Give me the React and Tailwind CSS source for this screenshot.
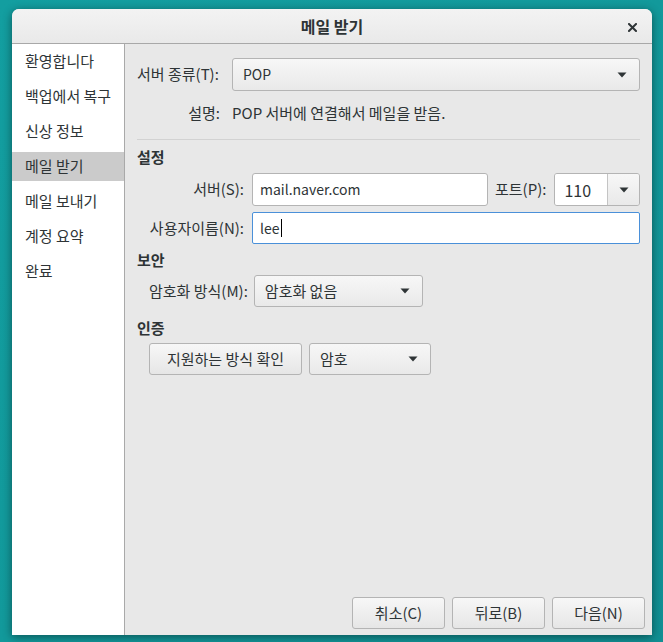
import React from "react";

const font = { fontFamily: '"Noto Sans CJK KR", "Noto Sans", sans-serif' };

function Arrow() {
  return (
    <svg width="10" height="6" viewBox="0 0 10 6" className="shrink-0">
      <path d="M0.5 0.5 L9.5 0.5 L5 5.5 Z" fill="#2e3436" />
    </svg>
  );
}

function Combo({ className, label, labelClass = "" }) {
  return (
    <div
      className={
        "flex items-center justify-between rounded-[3px] border border-[#b4b4b4] bg-gradient-to-b from-[#f7f7f7] to-[#e9e9e9] pl-[10px] pr-[12px] text-[15px] text-[#2e3436] " +
        className
      }
    >
      <span className={labelClass}>{label}</span>
      <Arrow />
    </div>
  );
}

function Button({ className, children }) {
  return (
    <div
      className={
        "flex items-center justify-center rounded-[3px] border border-[#b4b4b4] bg-gradient-to-b from-[#f7f7f7] to-[#e6e6e6] text-[15px] text-[#2e3436] " +
        className
      }
    >
      {children}
    </div>
  );
}

export default function App() {
  const items = ["환영합니다", "백업에서 복구", "신상 정보", "메일 받기", "메일 보내기", "계정 요약", "완료"];
  return (
    <div
      className="w-[663px] h-[642px] bg-gradient-to-br from-[#139ea0] via-[#12999b] to-[#118f93] pt-[9px] pl-[12px]"
      style={font}
    >
      <div className="w-[640px] h-[626px] flex flex-col rounded-t-[7px] bg-[#e8e8e8] shadow-[0_2px_10px_rgba(0,0,0,0.45)] overflow-hidden">
        {/* Title bar */}
        <div className="relative h-[35px] shrink-0 flex items-center justify-center bg-gradient-to-b from-[#f3f3f3] to-[#e9e9e9] border-b border-[#a8a8a8]">
          <span className="text-[16px] font-bold text-[#2e3436]">메일 받기</span>
          <span className="absolute right-[15px] top-[14px]">
            <svg width="9" height="9" viewBox="0 0 9 9">
              <path d="M1 1 L8 8 M8 1 L1 8" stroke="#2e3436" strokeWidth="2" strokeLinecap="square" />
            </svg>
          </span>
        </div>
        <div className="flex flex-1 min-h-0">
          {/* Sidebar */}
          <div className="w-[113px] shrink-0 bg-white border-r border-[#a9a9a9]">
            {items.map((t, i) => (
              <div key={t} className="h-[35px] py-[3px]">
                <div
                  className={
                    "h-[29px] flex items-center pl-[13px] text-[15px] text-[#2e3436] " +
                    (i === 3 ? "bg-[#cbcbcb]" : "")
                  }
                >
                  {t}
                </div>
              </div>
            ))}
          </div>
          {/* Content */}
          <div className="flex-1 flex flex-col pl-[12px] pr-[12px] pt-[14px] pb-[6px] text-[15px] text-[#2e3436]">
            <div className="flex items-center h-[33px]">
              <div className="w-[95px] shrink-0">서버 종류(T):</div>
              <Combo className="flex-1 h-[33px]" label="POP" labelClass="text-[14px]" />
            </div>
            <div className="flex items-center h-[26px] mt-[9px]">
              <div className="w-[95px] shrink-0 text-right pr-[12px]">설명:</div>
              <div>POP 서버에 연결해서 메일을 받음.</div>
            </div>
            <div className="h-px bg-[#d2d2d2] mt-[13px]" />
            <div className="h-[20px] mt-[7px] flex items-center font-bold">설정</div>
            <div className="flex items-center h-[33px] mt-[6px]">
              <div className="w-[115px] shrink-0 text-right pr-[8px]">서버(S):</div>
              <div className="w-[236px] h-[33px] rounded-[3px] border border-[#b4b4b4] bg-white flex items-center pl-[7px] text-[14px]">
                mail.naver.com
              </div>
              <div className="ml-[7px] mr-[8px]">포트(P):</div>
              <div className="flex-1 h-[33px] rounded-[3px] border border-[#b4b4b4] flex overflow-hidden">
                <div className="w-[53px] bg-white flex items-center pl-[9px] text-[16px] border-r border-[#c4c4c4]">110</div>
                <div className="flex-1 bg-gradient-to-b from-[#f7f7f7] to-[#e9e9e9] flex items-center justify-center">
                  <Arrow />
                </div>
              </div>
            </div>
            <div className="flex items-center h-[32px] mt-[6px]">
              <div className="w-[115px] shrink-0 text-right pr-[8px]">사용자이름(N):</div>
              <div className="flex-1 h-[32px] rounded-[2px] border border-[#4a90d9] bg-white flex items-center pl-[7px] text-[14px]">
                lee<span className="w-px h-[18px] bg-black ml-px" />
              </div>
            </div>
            <div className="h-[20px] mt-[6px] flex items-center font-bold">보안</div>
            <div className="flex items-center h-[32px] mt-[5px]">
              <div className="pl-[12px] pr-[6px]">암호화 방식(M):</div>
              <Combo className="w-[169px] h-[32px]" label="암호화 없음" />
            </div>
            <div className="h-[20px] mt-[11px] flex items-center font-bold">인증</div>
            <div className="flex items-center h-[32px] mt-[5px] pl-[12px]">
              <Button className="w-[153px] h-[32px]">지원하는 방식 확인</Button>
              <Combo className="ml-[7px] w-[122px] h-[32px]" label="암호" />
            </div>
            <div className="flex-1" />
            <div className="flex justify-end gap-[7px] -mr-[5px]">
              <Button className="w-[93px] h-[32px]">취소(C)</Button>
              <Button className="w-[93px] h-[32px]">뒤로(B)</Button>
              <Button className="w-[93px] h-[32px]">다음(N)</Button>
            </div>
          </div>
        </div>
      </div>
    </div>
  );
}
